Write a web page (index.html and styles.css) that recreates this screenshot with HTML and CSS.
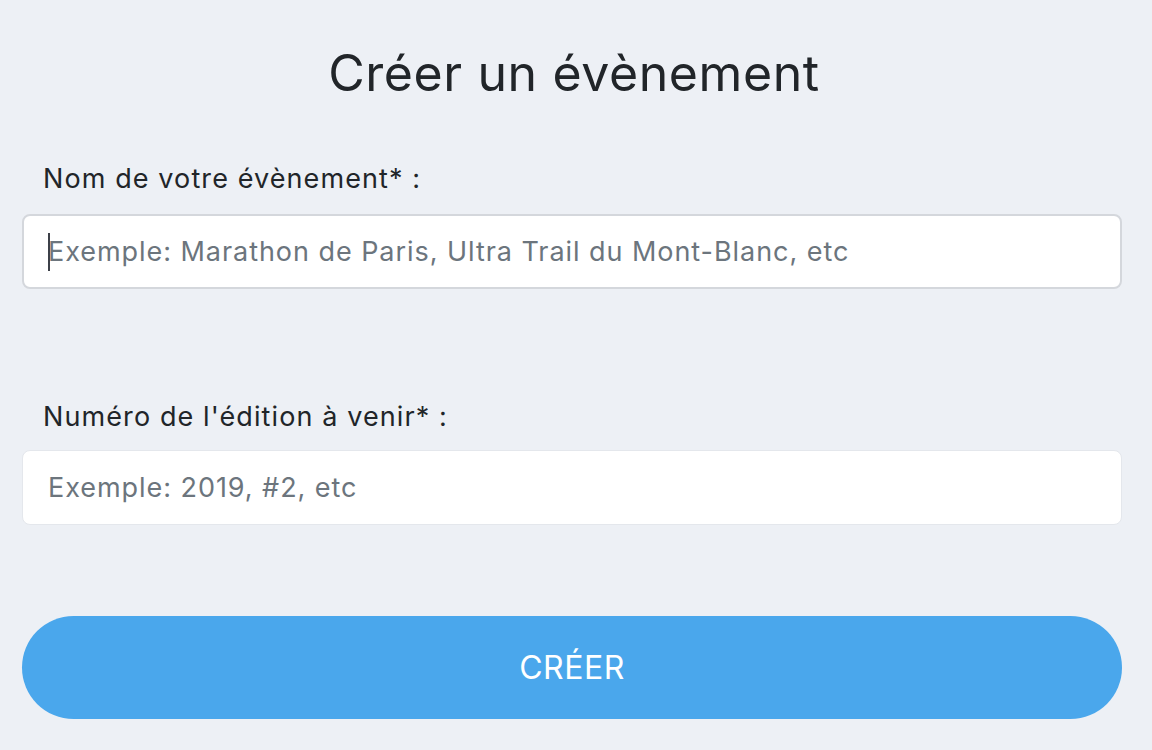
FILE: index.html
```html
<!DOCTYPE html>
<html lang="fr">
<head>
<meta charset="utf-8">
<title>Créer un évènement</title>
<link rel="stylesheet" href="styles.css">
</head>
<body>
<main class="page">
  <h1 class="title">Créer un évènement</h1>
  <form class="form">
    <label class="label label-first" for="name">Nom de votre évènement* :</label>
    <div class="field field-focused">
      <span class="caret"></span>
      <input class="input" id="name" type="text" placeholder="Exemple: Marathon de Paris, Ultra Trail du Mont-Blanc, etc">
    </div>
    <label class="label label-second" for="edition">Numéro de l'édition à venir* :</label>
    <div class="field">
      <input class="input" id="edition" type="text" placeholder="Exemple: 2019, #2, etc">
    </div>
    <button class="btn" type="button">CRÉER</button>
  </form>
</main>
</body>
</html>
```

FILE: styles.css
```css
html, body {
  margin: 0;
  padding: 0;
  background: #edf0f5;
}
body {
  font-family: "Inter", "Noto Sans", sans-serif;
  color: #212529;
}
.page {
  padding: 0 30px 0 22px;
  display: flex;
  flex-direction: column;
}
.title {
  margin: 43px 0 0 4px;
  font-size: 50px;
  line-height: 60px;
  font-weight: 400;
  letter-spacing: 0.6px;
  text-align: center;
  color: #212529;
}
.form {
  display: flex;
  flex-direction: column;
}
.label {
  font-size: 27px;
  line-height: 32px;
  font-weight: 400;
  letter-spacing: 1.1px;
  padding-left: 21px;
  color: #212529;
}
.label-first {
  margin-top: 60px;
}
.label-second {
  margin-top: 112px;
}
.field {
  position: relative;
  background: #fff;
  border: 1px solid #e4e7ec;
  border-radius: 8px;
  height: 73px;
  margin-top: 17px;
  display: flex;
  align-items: center;
}
.field-focused {
  border: 2px solid #d4d7dc;
  height: 71px;
  margin-top: 19px;
}
.caret {
  position: absolute;
  left: 24px;
  top: 17px;
  width: 2px;
  height: 38px;
  background: #3c4048;
}
.input {
  border: 0;
  outline: none;
  background: transparent;
  width: 100%;
  height: 100%;
  padding: 0 0 0 25px;
  font-family: "Inter", "Noto Sans", sans-serif;
  font-size: 27px;
  letter-spacing: 0.95px;
  color: #212529;
  box-sizing: border-box;
  border-radius: 8px;
}
.field-focused .input {
  padding-left: 24px;
}
.input::placeholder {
  color: #6c757d;
  opacity: 1;
}
.btn {
  margin-top: 91px;
  height: 103px;
  border: 0;
  border-radius: 52px;
  background: #4aa7ec;
  color: #fff;
  font-family: "Inter", "Noto Sans", sans-serif;
  font-size: 32px;
  font-weight: 400;
  letter-spacing: 0.5px;
  cursor: pointer;
}
```
